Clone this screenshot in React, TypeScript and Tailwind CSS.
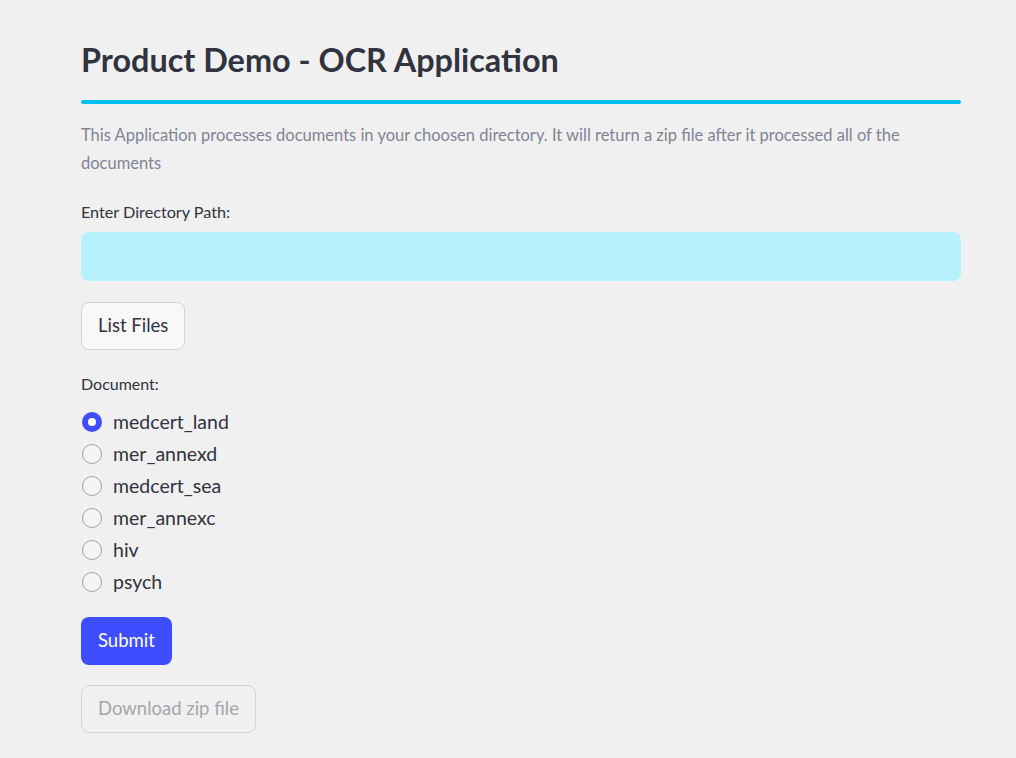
import { useState } from 'react';

const docs = ['medcert_land', 'mer_annexd', 'medcert_sea', 'mer_annexc', 'hiv', 'psych'];

export default function App() {
  const [selected, setSelected] = useState('medcert_land');
  const [path, setPath] = useState('');

  return (
    <div className="min-h-[758px] bg-[#f0f0f0] text-[#31333f] font-['Lato','Noto_Sans',sans-serif]">
      <div className="w-[880px] ml-[81px] pt-[38px]">
        {/* Title */}
        <h1 className="text-[32.4px] leading-[44px] font-bold">Product Demo - OCR Application</h1>
        <div className="h-[4px] rounded-full bg-[#00c0f2] mt-[18px]"></div>

        {/* Description */}
        <p className="mt-[17px] text-[16.5px] leading-[28px] text-[#808495]">
          This Application processes documents in your choosen directory. It will return a zip file after it processed all of the documents
        </p>

        {/* Directory input */}
        <label className="block mt-[25px] text-[16.2px] leading-[20px]">Enter Directory Path:</label>
        <input
          value={path}
          onChange={(e) => setPath(e.target.value)}
          className="block w-full h-[49px] mt-[10px] rounded-lg bg-[#b6f2fe] px-3 text-[16px] outline-none"
        />

        <button className="mt-[21px] h-[48px] px-[16px] rounded-lg border border-[#d3d3d6] bg-[#f8f8f8] text-[18.5px]">
          List Files
        </button>

        {/* Document radio list */}
        <div className="mt-[24px] text-[16px] leading-[20px]">Document:</div>
        <div className="mt-[12px] flex flex-col">
          {docs.map((d) => (
            <label key={d} className="flex items-center h-[32px] cursor-pointer" onClick={() => setSelected(d)}>
              {selected === d ? (
                <span className="w-[20px] h-[20px] ml-[1px] rounded-full bg-[#3d4dff] flex items-center justify-center">
                  <span className="w-[8px] h-[8px] rounded-full bg-white"></span>
                </span>
              ) : (
                <span className="w-[20px] h-[20px] ml-[1px] rounded-full border border-[#a3a3a8] bg-[#f5f5f5]"></span>
              )}
              <span className="ml-[11px] text-[19.5px]">{d}</span>
            </label>
          ))}
        </div>

        <button className="block mt-[19px] h-[48px] px-[17px] rounded-lg bg-[#3d4dff] text-white text-[18.5px]">
          Submit
        </button>

        <button disabled className="block mt-[20px] h-[48px] px-[16px] rounded-lg border border-[#d3d3d6] text-[#a6a6ab] text-[18.5px]">
          Download zip file
        </button>
      </div>
    </div>
  );
}
